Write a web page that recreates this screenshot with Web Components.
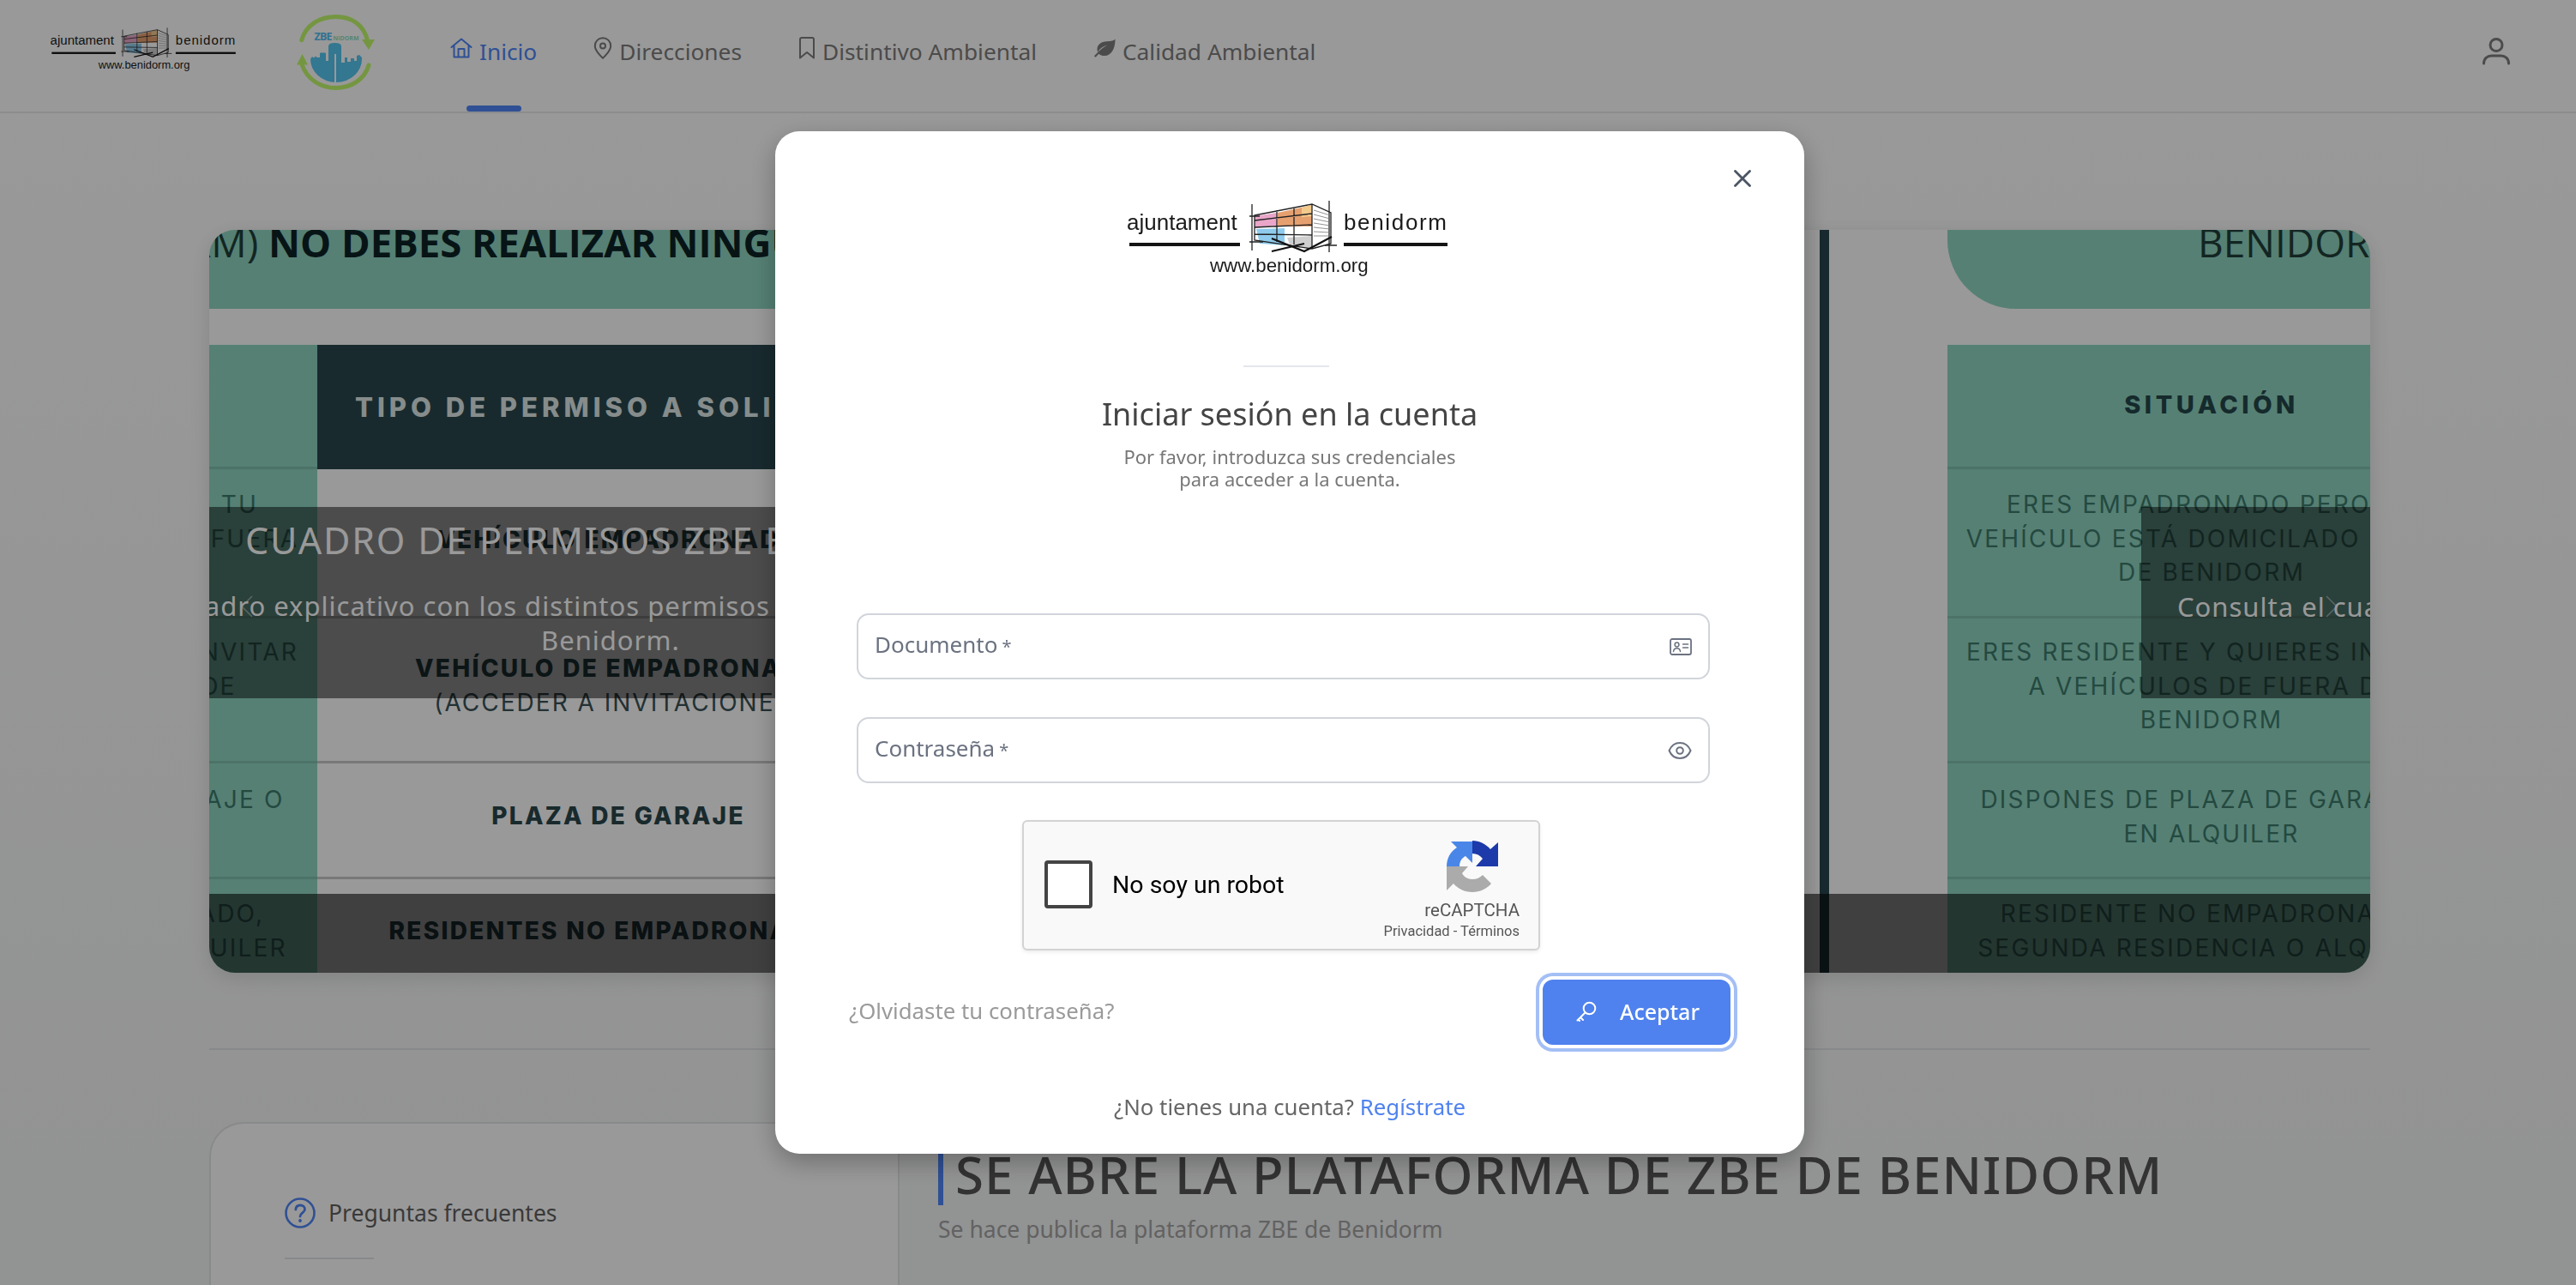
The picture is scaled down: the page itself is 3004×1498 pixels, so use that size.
<!DOCTYPE html>
<html lang="es"><head><meta charset="utf-8"><title>ZBE Benidorm</title>
<style>
html,body{margin:0;padding:0;height:1498px;overflow:hidden;background:#f6f8f7;}
body{font-family:"Noto Sans","Open Sans",sans-serif;}
</style></head>
<body>
<site-header></site-header>
<page-main></page-main>
<login-modal></login-modal>
<script>
const F='"Noto Sans","Open Sans",sans-serif';
const ICONS={
home:['0 0 26 24','<path d="M1.5 11 13 1.5 24.5 11M4.5 9v13.500h17V9M9.500 22.500V13h7v9.500" fill="none" stroke="currentColor" stroke-width="2" stroke-linejoin="round" stroke-linecap="round"/>'],
pin:['0 0 22 26','<path d="M11 1.200a9.200 9.200 0 0 0-9.200 9.200C1.800 16.600 11 24.800 11 24.800s9.200-8.200 9.200-14.400A9.200 9.200 0 0 0 11 1.200Z" fill="none" stroke="currentColor" stroke-width="2"/><circle cx="11" cy="10.400" r="3" fill="none" stroke="currentColor" stroke-width="2"/>'],
bookmark:['0 0 20 26','<path d="M2 24.500V3a2 2 0 0 1 2-2h12a2 2 0 0 1 2 2v21.500l-8-6.500Z" fill="none" stroke="currentColor" stroke-width="2" stroke-linejoin="round"/>'],
leaf:['0 0 26 22','<path d="M25.500 0.500C24 2.500 21 3 16 3.200 9 3.500 4.500 7 4.500 12.500c0 1.300.3 2.400.7 3.300C7.500 11.500 11.500 8.800 16.500 7.500 12 9.800 6.800 13.800 1 20.300l1.600 1.400 3.700-4C8 19.500 10.500 20 13 20c8 0 12.500-8 12.500-19.500Z" fill="currentColor"/>'],
user:['0 0 34 32','<circle cx="17" cy="8.500" r="7" fill="none" stroke="currentColor" stroke-width="3"/><path d="M2.500 30c0-5.500 4-9 9-9h11c5 0 9 3.500 9 9" fill="none" stroke="currentColor" stroke-width="3" stroke-linecap="round"/>'],
help:['0 0 36 36','<circle cx="18" cy="18" r="16.500" fill="none" stroke="currentColor" stroke-width="2.600"/><path d="M12.800 14c.3-3 2.500-5 5.400-5 3 0 5.300 2 5.300 4.800 0 4-5.500 4.300-5.500 8.200" fill="none" stroke="currentColor" stroke-width="2.800" stroke-linecap="round"/><circle cx="18" cy="27" r="1.900" fill="currentColor"/>'],
card:['0 0 26 20','<rect x="1" y="1" width="24" height="18" rx="2" fill="none" stroke="currentColor" stroke-width="1.800"/><circle cx="8.500" cy="7.500" r="2.400" fill="none" stroke="currentColor" stroke-width="1.500"/><path d="M4.500 15.500c.3-2.600 2-3.800 4-3.800s3.700 1.200 4 3.800M15.500 7h6M15.500 11h6" fill="none" stroke="currentColor" stroke-width="1.500" stroke-linecap="round"/>'],
eye:['0 0 28 22','<path d="M1.500 11C4 5 8.500 2 14 2s10 3 12.500 9c-2.500 6-7 9-12.500 9S4 17 1.500 11Z" fill="none" stroke="currentColor" stroke-width="2" stroke-linejoin="round"/><circle cx="14" cy="11" r="3.800" fill="none" stroke="currentColor" stroke-width="2"/>'],
key:['0 0 24 24','<circle cx="15.500" cy="8.500" r="6.800" fill="none" stroke="currentColor" stroke-width="2"/><path d="M10.500 13.500 1.500 22.500M5 19l3 3M2.500 21.500 4 23" fill="none" stroke="currentColor" stroke-width="2" stroke-linecap="round"/>'],
close:['0 0 20 20','<path d="M1.500 1.500 18.500 18.500M18.500 1.500 1.500 18.500" fill="none" stroke="currentColor" stroke-width="2.800" stroke-linecap="round"/>']
};
function def(name,html,init){
  const t=document.createElement('template');t.innerHTML=html;
  customElements.define(name,class extends HTMLElement{
    constructor(){super();this.attachShadow({mode:'open'}).appendChild(t.content.cloneNode(true));}
    connectedCallback(){if(init)init(this,this.shadowRoot);}
  });
}
def('zbe-icon','<style>:host{display:inline-flex;line-height:0}svg{display:block;width:100%;height:100%}</style><span id="h" style="display:contents"></span>',(el,s)=>{
  const [vb,body]=ICONS[el.getAttribute('name')];
  s.getElementById('h').innerHTML=`<svg viewBox="${vb}" xmlns="http://www.w3.org/2000/svg">${body}</svg>`;
});
def('bnd-logo',`<style>:host{display:block}svg{display:block;width:100%;height:auto}text{font-family:"Liberation Sans",sans-serif;fill:#1b1b1b}</style>
<svg viewBox="0 0 377 95" xmlns="http://www.w3.org/2000/svg">
<text x="1" y="38" font-size="26">ajuntament</text>
<text x="254" y="38" font-size="26" textLength="120" lengthAdjust="spacing">benidorm</text>
<rect x="4" y="53" width="129" height="4" fill="#141414"/><rect x="254" y="53" width="121" height="4" fill="#141414"/>
<text x="98" y="87" font-size="22.300">www.benidorm.org</text>
<g>
<polygon points="150,22 176,18 176,33 150,36" fill="#e9a6c8"/>
<polygon points="177,18 217,9 217,34 177,34" fill="#e6a070"/>
<polygon points="205,12 217,9 217,22 205,23" fill="#f3ca8c"/>
<polygon points="152,37 185,36 185,56 156,54" fill="#8fcbec"/>
<polygon points="188,47 217,45 217,60 192,58" fill="#cfcfcf"/>
<g fill="none" stroke="#222" stroke-width="1.300">
<path d="M150 21 217 8 239 18V54L217 60 150 50ZM217 8V60M176 15V52M196 12V55M150 35 217 32M150 27 217 19M150 43 217 44"/>
<path d="M147 8V62M237 4V64M144 22H156M144 52H160M232 56H246"/>
<path d="M219 15 238 21M219 20 238 25M219 25 238 29M219 30 238 33M219 35 238 37M219 40 238 41M219 45 238 45" stroke="#777" stroke-width=".8"/>
</g>
<path d="M170 48 208 63 240 46M170 63 208 54" fill="none" stroke="#111" stroke-width="2.200"/>
</g></svg>`);
def('zbe-logo',`<style>:host{display:block}svg{display:block;width:100%;height:100%}text{font-family:"Open Sans",sans-serif;font-weight:700}</style>
<svg viewBox="0 0 92 88" xmlns="http://www.w3.org/2000/svg">
<path d="M6.700 29.700C12 12 28 2.500 46.700 2.500S79 12 83.500 30" fill="none" stroke="#c3fb6d" stroke-width="5" stroke-linecap="round"/>
<polygon points="77,29 92,29 85,41" fill="#c3fb6d"/>
<path d="M85 59C80 76 64 85.500 46.700 85.500S13 76 7 58" fill="none" stroke="#c3fb6d" stroke-width="5" stroke-linecap="round"/>
<polygon points="1,58.500 14,58.500 7.500,46" fill="#c3fb6d"/>
<text x="21.500" y="30" font-size="12.500" fill="#55bdf0" textLength="21">ZBE</text>
<text x="43.500" y="30" font-size="7" fill="#8fdfbc" textLength="30">NIDORM</text>
<path d="M17 52 19 49 21 50.500 23 48.500 25 50H28V45Q28 44.500 29 44.500H34L35 45V54H38V37Q38 33 45.500 33 53 33 53 37V56H57V50H60V55H64V51H68V54H71V48L74 47 77 50V52A30 27 0 0 1 17 52Z" fill="#55c6f0"/>
<rect x="45" y="46" width="2" height="34" fill="#fff"/>
</svg>`);
def('nav-item',`<style>
:host{display:flex;position:relative;align-items:center;height:130px;gap:8px;color:#7d7d7d;font:26.300px/36px ${F}}
:host([active]){color:#4f86f7}
.t{margin-top:-10px}
::slotted(zbe-icon){margin-top:-18px}
.u{display:none;position:absolute;left:50%;margin-left:-32px;bottom:0;width:64px;height:7px;border-radius:4px;background:#4f86f7}
:host([active]) .u{display:block}
</style><slot name="i"></slot><span class="t"><slot></slot></span><span class="u"></span>`);
def('site-header',`<style>
:host{display:flex;align-items:flex-start;height:130px;background:#fff;border-bottom:2px solid #e8eaed;box-sizing:content-box}
bnd-logo{width:218px;margin:30px 0 0 58px}
zbe-logo{width:92px;height:88px;margin:17px 0 0 69px}
nav{display:flex;gap:66px;margin-left:88px}
.user{margin:44px 76px 0 auto;color:#7d7d7d}
</style>
<bnd-logo></bnd-logo><zbe-logo></zbe-logo>
<nav>
<nav-item active><zbe-icon slot="i" name="home" style="width:26px;height:24px"></zbe-icon>Inicio</nav-item>
<nav-item><zbe-icon slot="i" name="pin" style="width:22px;height:26px"></zbe-icon>Direcciones</nav-item>
<nav-item><zbe-icon slot="i" name="bookmark" style="width:20px;height:26px"></zbe-icon>Distintivo Ambiental</nav-item>
<nav-item><zbe-icon slot="i" name="leaf" style="width:26px;height:22px"></zbe-icon>Calidad Ambiental</nav-item>
</nav>
<zbe-icon class="user" name="user" style="width:34px;height:32px"></zbe-icon>`);
def('situation-col',`<style>
:host{display:flex;flex:none;flex-direction:column;width:616px;color:#3c7a6c;font:400 28px/39.500px Inter,sans-serif;text-align:center;letter-spacing:2.200px}
.band{height:92px;background:#8fd6c2;border-bottom-left-radius:80px;overflow:visible;white-space:nowrap;text-align:left;padding-left:292px;font:400 46px/44px "Open Sans",sans-serif;color:#203f3a;box-sizing:border-box;letter-spacing:0}
.band span{display:block;margin-top:-8px}
.tb{margin-top:42px;background:#8fd6c2;flex:1;display:flex;flex-direction:column}
.c{box-sizing:border-box;border-bottom:3px solid #80c0ad;flex:none}
.h{height:145px;display:flex;align-items:center;justify-content:center;font-weight:800;font-size:29px;letter-spacing:4.500px;color:#24464a;padding-bottom:3px}
.a{height:174px;padding-top:22px}.b{height:169px;padding-top:20px}.d{height:135px;padding-top:23px}.e{flex:1;border:0;padding-top:21px}
.c div{white-space:nowrap}
</style>
<div class="band"><span>BENIDORM)</span></div>
<div class="tb">
<div class="c h">SITUACIÓN</div>
<div class="c a"><div>ERES EMPADRONADO PERO TU</div><div>VEHÍCULO ESTÁ DOMICILADO FUERA</div><div>DE BENIDORM</div></div>
<div class="c b"><div>ERES RESIDENTE Y QUIERES INVITAR</div><div>A VEHÍCULOS DE FUERA DE</div><div>BENIDORM</div></div>
<div class="c d"><div>DISPONES DE PLAZA DE GARAJE O</div><div>EN ALQUILER</div></div>
<div class="c e"><div>RESIDENTE NO EMPADRONADO,</div><div>SEGUNDA RESIDENCIA O ALQUILER</div></div>
</div>`);
def('permit-col',`<style>
:host{display:flex;flex:none;flex-direction:column;width:1752px;color:#2a464c;font:800 28px/40px Inter,sans-serif;text-align:center;position:relative;letter-spacing:2.300px}
.band{height:92px;width:1500px;background:#8fd6c2;white-space:nowrap;text-align:left;font:700 45.500px/44px "Open Sans",sans-serif;color:#0d2226;letter-spacing:0}
.band span{display:block;margin:-8px 0 0 -57px}
.tb{margin-top:42px;width:1700px;background:#fff;flex:1;display:flex;flex-direction:column}
.c{box-sizing:border-box;border-bottom:3px solid #c8c8c8;flex:none;width:100%;padding-right:998px}
.h{height:145px;background:#28464d;color:#dfe9e8;font-size:31px;font-weight:800;letter-spacing:5px;border:0;padding-top:53px;white-space:nowrap;text-align:left}
.h span{margin-left:44px}
.c div{white-space:nowrap}
.l{font-weight:400;color:#3a5257;letter-spacing:2px}
.a{height:174px;padding-top:62px}.b{height:169px;padding-top:38px}.d{height:135px;padding-top:41px}.e{flex:1;border:0;padding-top:40px}
</style>
<div class="band"><span>NO DEBES REALIZAR NINGÚN TRÁMITE</span></div>
<div class="tb">
<div class="c h"><span>TIPO DE PERMISO A SOLICITAR</span></div>
<div class="c a"><div>VEHÍCULO EMPADRONADO</div></div>
<div class="c b"><div>VEHÍCULO DE EMPADRONADO</div><div class="l">(ACCEDER A INVITACIONES)</div></div>
<div class="c d"><div>PLAZA DE GARAJE</div></div>
<div class="c e"><div>RESIDENTES NO EMPADRONADOS</div></div>
</div>`);
def('hero-carousel',`<style>
:host{display:block;position:relative;width:2520px;height:866px;border-radius:30px;overflow:hidden;background:#fff;box-shadow:0 6px 24px rgba(0,0,0,.12)}
.track{display:flex;height:100%}
.first{margin-left:-490px}
.line{flex:none;width:11px;background:#28464d;margin-right:138px}
.bar{position:absolute;left:0;right:0;bottom:0;height:92px;background:rgba(0,0,0,.58)}
.cap{position:absolute;top:323px;height:223px;background:rgba(0,0,0,.5);color:#fff;overflow:hidden;white-space:nowrap;box-sizing:border-box}
.cap.l{left:0;width:1000px}
.cap.r{left:2253px;width:267px;font:31px/40px ${F};letter-spacing:1px;padding:96px 0 0 42px}
.ct{font:43px/56px ${F};margin:11px 0 0 42px;letter-spacing:1.800px}
.cd{font:31px/40px ${F};margin:28px 0 0 -46px;letter-spacing:1px}
.ce{font:31px/40px ${F};margin-left:387px;letter-spacing:1px}
.ch{position:absolute;top:426px;width:14px;height:26px;color:rgba(255,255,255,.45)}
svg{display:block}
</style>
<div class="track"><situation-col class="first"></situation-col><permit-col></permit-col><div class="line"></div><situation-col></situation-col></div>
<div class="bar"></div>
<div class="cap l"><div class="ct">CUADRO DE PERMISOS ZBE BENIDORM</div><div class="cd">Cuadro explicativo con los distintos permisos de la</div><div class="ce">Benidorm.</div></div>
<div class="cap r">Consulta el cuadro</div>
<svg class="ch" style="left:37px" viewBox="0 0 14 26"><path d="M13 1 1 13l12 12" fill="none" stroke="currentColor" stroke-width="1.500"/></svg>
<svg class="ch" style="left:2468px" viewBox="0 0 14 26"><path d="M1 1l12 12L1 25" fill="none" stroke="currentColor" stroke-width="1.500"/></svg>`);
def('page-main',`<style>
:host{display:block;padding:136px 0 0 244px;height:1366px;box-sizing:border-box;overflow:hidden;background:linear-gradient(#fff,#f4f6f5 90%)}
.rule{width:2520px;height:2px;margin-top:88px;background:#e3e5e8}
.card{display:flex;width:2520px;height:400px;margin-top:84px}
.faq{flex:none;box-sizing:border-box;width:805px;height:100%;padding:84px 0 0 86px;background:#fff;border:2px solid #e3e5e8;border-bottom:0;border-top-left-radius:40px}
.q{display:flex;align-items:center;gap:15px;color:#5f5f5f;font:26.500px/40px ${F}}
.q zbe-icon{width:36px;height:36px;color:#4f86f7}
.sm{width:104px;height:2px;margin-top:32px;background:#e3e5e8}
.news{padding:30px 0 0 45px}
h1{margin:0;box-sizing:border-box;border-left:6px solid #4f86f7;padding-left:14px;height:67px;font:500 60px/62px ${F};color:#555;white-space:nowrap;letter-spacing:1.050px}
p{margin:10px 0 0;font:26.500px/36px ${F};color:#a4a4a4}
</style>
<hero-carousel></hero-carousel>
<div class="rule"></div>
<div class="card">
<div class="faq"><div class="q"><zbe-icon name="help"></zbe-icon>Preguntas frecuentes</div><div class="sm"></div></div>
<div class="news"><h1>SE ABRE LA PLATAFORMA DE ZBE DE BENIDORM</h1><p>Se hace publica la plataforma ZBE de Benidorm</p></div>
</div>`);
def('text-field',`<style>
:host{display:flex;align-items:center;justify-content:space-between;box-sizing:border-box;height:77px;margin:0 24px 0 9px;padding:0 19px;border:2px solid #d1d5db;border-radius:14px;background:#fff;color:#6b7280;font:26px/36px ${F}}
.l{margin-top:-5px}
sup{font-size:20px;line-height:0;vertical-align:baseline;margin-left:5px}
</style><span class="l"><slot></slot><sup>*</sup></span><slot name="i"></slot>`);
def('recaptcha-box',`<style>
:host{display:block;position:relative;box-sizing:border-box;width:604px;height:152px;background:#f9f9f9;border:2px solid #d3d3d3;border-radius:6px;box-shadow:0 2px 4px rgba(0,0,0,.08);font-family:Roboto,sans-serif;color:#000}
.row{display:flex;height:100%;box-sizing:border-box;padding:0 22px 0 24px;align-items:center}
.box{width:56px;height:56px;box-sizing:border-box;border:4px solid #444;border-radius:4px;background:#fff;flex:none;margin-top:-2px}
.t{font-size:28.500px;margin-left:23px;margin-top:-2px}
.r{margin-left:auto;display:flex;flex-direction:column;align-items:flex-end;height:100%;padding-top:22px;box-sizing:border-box}
svg{width:60px;height:60px;margin-right:25px;display:block}
.a{font-size:20.500px;line-height:24px;color:#555;margin-top:9px}
.b{font-size:16.500px;line-height:22px;color:#555;margin-top:2px}
</style><div class="row"><div class="box"></div><div class="t">No soy un robot</div>
<div class="r"><svg viewBox="0 0 60 60"><path d="M0 30H15C15 24 18 20 22 18L30 26V1H5L12 8C4 13 0 21 0 30Z" fill="#4a86e8"/><path d="M30 0C38 0 46 4 51 10L60 2V30H34L42 21C39 17 35 15 30 15Z" fill="#1c3aa9"/><path d="M0 30V58L8 50C13 56 21 60 30 60 39 60 47 56 52 50L42 40C39 43 35 45 30 45 24 45 20 42 18 38L25 30Z" fill="#ababab"/></svg>
<div class="a">reCAPTCHA</div><div class="b">Privacidad - Términos</div></div></div>`);
def('login-modal',`<style>
:host{position:fixed;inset:0;display:block;background:rgba(0,0,0,.4);z-index:10;padding:153px 0 0 904px;box-sizing:border-box}
.m{position:relative;box-sizing:border-box;width:1200px;height:1192px;padding:77px 86px 0;background:#fff;border-radius:28px;box-shadow:0 10px 30px rgba(0,0,0,.28);font-family:${F}}
.x{position:absolute;top:45px;right:62px;width:20px;height:20px;color:#4b5563}
bnd-logo{width:377px;margin:0 0 0 323px}
.rule{width:100px;height:2px;margin:101px auto 0;background:#e3e6ea;position:relative;left:-4px}
h2{margin:33px 0 0;text-align:center;font:400 36px/44px ${F};color:#444}
.s{margin:14px 0 0;text-align:center;font:22px/26px ${F};color:#777}
text-field.f1{margin-top:144px}
text-field.f2{margin-top:44px}
recaptcha-box{margin:43px 0 0 202px}
.act{display:flex;align-items:center;justify-content:space-between;margin-top:34px}
.fg{color:#9a9a9a;font:25.800px/36px ${F};margin-top:-4px}
button{display:flex;align-items:center;gap:27px;box-sizing:border-box;width:219px;height:76px;padding:0 0 2px 39px;border:0;border-radius:12px;background:#4f82ee;color:#fff;font:500 25px/36px ${F};box-shadow:0 0 0 4px #fff,0 0 0 8px #a4bff5}
button zbe-icon{width:24px;height:24px}
.reg{margin-top:54px;text-align:center;font:25.800px/36px ${F};color:#666}
.reg a{color:#4f82ee;text-decoration:none}
</style>
<div class="m" role="dialog">
<zbe-icon class="x" name="close"></zbe-icon>
<bnd-logo></bnd-logo>
<div class="rule"></div>
<h2>Iniciar sesión en la cuenta</h2>
<div class="s">Por favor, introduzca sus credenciales<br>para acceder a la cuenta.</div>
<text-field class="f1">Documento<zbe-icon slot="i" name="card" style="width:26px;height:20px"></zbe-icon></text-field>
<text-field class="f2">Contraseña<zbe-icon slot="i" name="eye" style="width:28px;height:22px"></zbe-icon></text-field>
<recaptcha-box></recaptcha-box>
<div class="act"><span class="fg">¿Olvidaste tu contraseña?</span><button><zbe-icon name="key"></zbe-icon>Aceptar</button></div>
<div class="reg">¿No tienes una cuenta? <a href="#">Regístrate</a></div>
</div>`);
</script>
</body></html>
